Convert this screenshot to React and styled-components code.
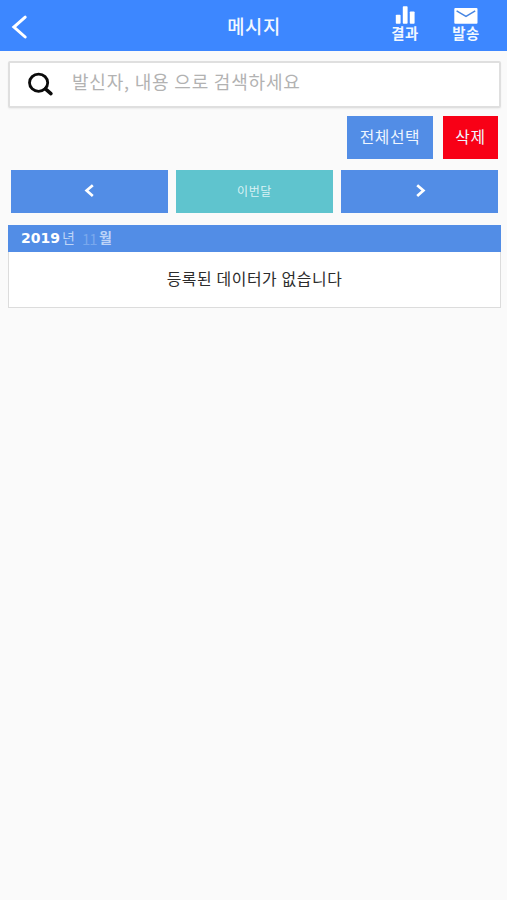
import React, { useState } from "react";
import styled, { createGlobalStyle } from "styled-components";

const MessagePage = () => {
  const [keyword, setKeyword] = useState("");

  return (
    <Page>
      <Header>
        <BackButton aria-label="뒤로">
          <svg width="20" height="26" viewBox="0 0 20 26" fill="none">
            <path d="M15.2 3.2 L3.9 13 L15.2 23" stroke="#fff" strokeWidth="3" strokeLinecap="round" />
          </svg>
        </BackButton>
        <Title>메시지</Title>
        <HeaderMenu>
          <MenuButton>
            <svg width="24" height="18" viewBox="0 0 24 18" fill="#fff">
              <rect x="2.8" y="8.8" width="4.8" height="8.9" rx="0.8" />
              <rect x="9.8" y="0.2" width="4.8" height="17.5" rx="0.8" />
              <rect x="16.8" y="5.5" width="4.8" height="12.2" rx="0.8" />
            </svg>
            <MenuLabel>결과</MenuLabel>
          </MenuButton>
          <MenuButton>
            <svg width="24" height="18" viewBox="0 0 24 18" fill="none">
              <rect x="0.3" y="2" width="23.2" height="15.8" rx="1" fill="#fff" />
              <path d="M2.6 4.8 L12 10.4 L21.2 4.8" stroke="#4685e2" strokeWidth="1.4" />
            </svg>
            <MenuLabel>발송</MenuLabel>
          </MenuButton>
        </HeaderMenu>
      </Header>

      <SearchBox>
        <svg width="28" height="26" viewBox="0 0 28 26" fill="none" stroke="#0b0b0b">
          <ellipse cx="11.6" cy="10.7" rx="9.1" ry="8.6" strokeWidth="2.8" />
          <path d="M18.4 16.9 L23.9 21.6" strokeWidth="3.6" strokeLinecap="round" />
        </svg>
        <SearchInput
          placeholder="발신자, 내용 으로 검색하세요"
          value={keyword}
          onChange={(e) => setKeyword(e.target.value)}
        />
      </SearchBox>

      <ActionRow>
        <Button $width={86}>전체선택</Button>
        <Button $width={55} $color="#f80016">삭제</Button>
      </ActionRow>

      <MonthRow>
        <Button aria-label="이전달">
          <svg width="12" height="14" viewBox="0 0 12 14" fill="none">
            <path d="M8.8 1.2 L2.6 6.6 L8.8 12" stroke="#fff" strokeWidth="2.7" />
          </svg>
        </Button>
        <Button $color="#5fc4ce" $small>이번달</Button>
        <Button aria-label="다음달">
          <svg width="12" height="14" viewBox="0 0 12 14" fill="none">
            <path d="M3.2 1.2 L9.4 6.6 L3.2 12" stroke="#fff" strokeWidth="2.7" />
          </svg>
        </Button>
      </MonthRow>

      <ListCard>
        <ListHeader>
          <Year>2019</Year>
          <Unit>년</Unit>
          <Month>11</Month>
          <Unit $bold>월</Unit>
        </ListHeader>
        <EmptyText>등록된 데이터가 없습니다</EmptyText>
      </ListCard>
    </Page>
  );
};

export default MessagePage;

const GlobalStyle = createGlobalStyle`
  * {
    box-sizing: border-box;
  }

  body {
    margin: 0;
    background: #fafafa;
    font-family: "Noto Sans CJK KR", sans-serif;
  }

  button {
    margin: 0;
    padding: 0;
    border: none;
    font-family: inherit;
    cursor: pointer;
  }

  svg {
    display: block;
    flex-shrink: 0;
  }
`;

const Page = ({ children }) => (
  <>
    <GlobalStyle />
    <PageWrapper>{children}</PageWrapper>
  </>
);

const PageWrapper = styled.div`
  min-height: 100vh;
  background: #fafafa;
`;

const Header = styled.header`
  display: grid;
  grid-template-columns: 1fr auto 1fr;
  align-items: center;
  height: 51px;
  padding: 0 21px 0 10px;
  background: #3d87ff;
`;

const BackButton = styled.button`
  justify-self: start;
  padding-top: 3px;
  background: transparent;
`;

const Title = styled.h1`
  margin: 0 0 0 12px;
  padding-top: 1px;
  color: #f2f8ff;
  font-size: 18.8px;
  font-weight: 500;
  letter-spacing: 0.6px;
  line-height: 28px;
`;

const HeaderMenu = styled.div`
  display: flex;
  justify-content: flex-end;
  align-self: start;
  gap: 21px;
  padding-top: 6px;
`;

const MenuButton = styled.button`
  display: flex;
  flex-direction: column;
  align-items: center;
  width: 40px;
  background: transparent;
`;

const MenuLabel = styled.span`
  margin-top: -1px;
  color: #f2f8ff;
  font-size: 14.4px;
  font-weight: 700;
  letter-spacing: 0.5px;
  line-height: 20px;
`;

const SearchBox = styled.div`
  display: flex;
  align-items: center;
  height: 47px;
  margin: 10px 6px 0 8px;
  padding-left: 17px;
  background: #fff;
  border: 2px solid #dfdfdf;
  border-radius: 2px;
  box-shadow: 0 1px 2px rgba(0, 0, 0, 0.06);
`;

const SearchInput = styled.input`
  flex: 1;
  min-width: 0;
  height: 28px;
  margin-bottom: 8px;
  padding: 0 0 0 17px;
  border: none;
  outline: none;
  background: transparent;
  color: #333;
  font-family: inherit;
  font-size: 18px;
  letter-spacing: 0.8px;

  &::placeholder {
    color: #b2b2b2;
    opacity: 1;
  }
`;

const Button = styled.button`
  display: flex;
  align-items: center;
  justify-content: center;
  width: ${({ $width }) => ($width ? `${$width}px` : "auto")};
  height: 43px;
  padding-bottom: 2px;
  background: ${({ $color }) => $color || "#528de6"};
  color: ${({ $small }) => ($small ? "#d9f2f4" : "#eef5ff")};
  font-size: ${({ $small }) => ($small ? "12px" : "15.8px")};
  letter-spacing: 0.6px;
`;

const ActionRow = styled.div`
  display: flex;
  justify-content: flex-end;
  gap: 10px;
  padding: 8px 9px 0 0;
`;

const MonthRow = styled.div`
  display: grid;
  grid-template-columns: repeat(3, 1fr);
  gap: 8px;
  padding: 11px 9px 0 11px;
`;

const ListCard = styled.section`
  height: 83px;
  margin: 12px 6px 0 8px;
  background: #fff;
  border: 1px solid #dcdcdc;
  border-top: none;
`;

const ListHeader = styled.div`
  display: flex;
  align-items: center;
  height: 27px;
  margin: 0 -1px;
  padding-left: 13px;
  background: #528de6;
  color: #fff;
  font-size: 15px;
  line-height: 27px;
`;

const Year = styled.span`
  width: 41px;
  font-family: "DejaVu Sans", "Noto Sans CJK KR", sans-serif;
  font-size: 14px;
  font-weight: 700;
`;

const Month = styled.span`
  width: 17px;
  margin-left: 7px;
  color: #79a8ed;
  letter-spacing: -1px;
`;

const Unit = styled.span`
  margin-top: -3px;
  color: #bdd4f7;
  font-size: 14px;
  font-weight: ${({ $bold }) => ($bold ? 700 : 400)};
`;

const EmptyText = styled.p`
  margin: 0;
  padding-top: 14px;
  color: #2c2c2c;
  font-size: 15.9px;
  letter-spacing: 0.6px;
  line-height: 26px;
  text-align: center;
`;
